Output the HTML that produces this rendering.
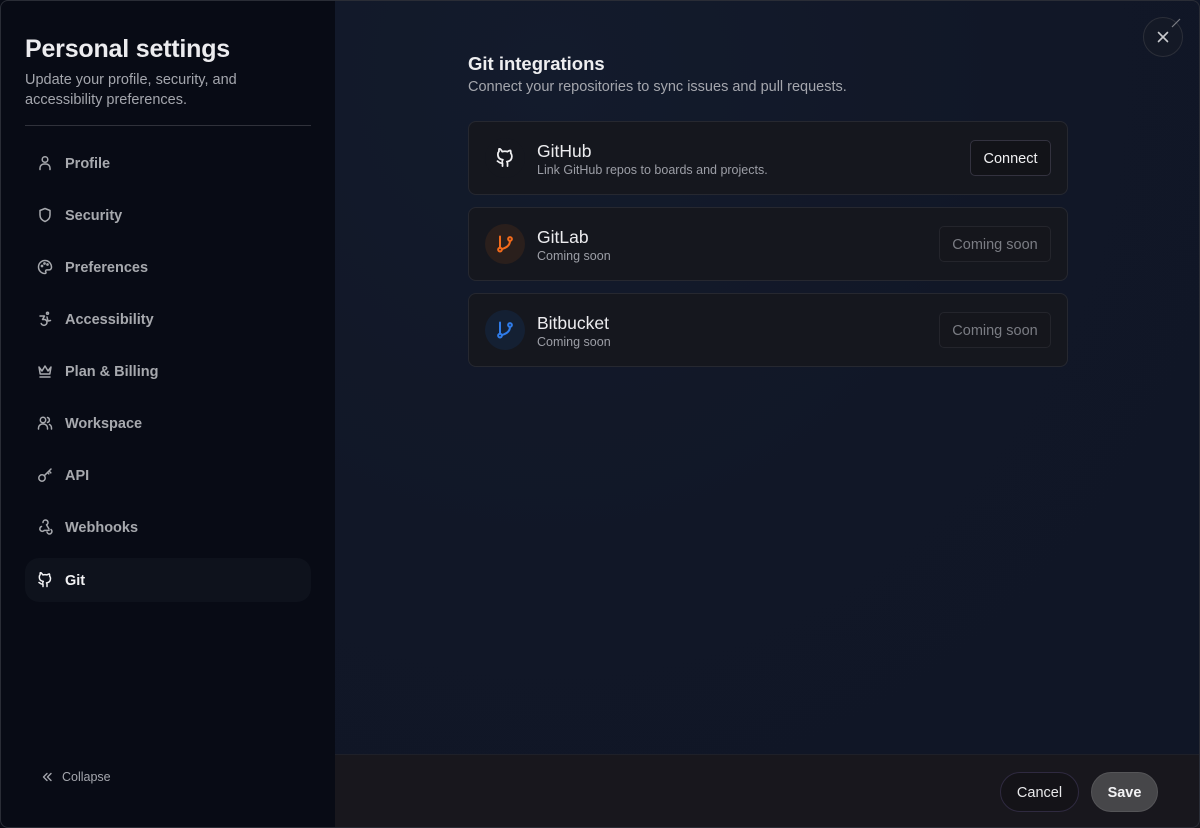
<!DOCTYPE html>
<html><head><meta charset="utf-8"><style>
*{box-sizing:border-box;margin:0;padding:0}
body{width:1200px;height:828px;overflow:hidden;background:#0b0e17;font-family:"Liberation Sans",sans-serif;position:relative}
.border{position:absolute;inset:0;border:1px solid #2a2d36;border-radius:8px;pointer-events:none;z-index:5}
.side{position:absolute;left:0;top:0;width:335px;height:828px;background:#080b15}
.side h1{position:absolute;left:25px;top:35px;font-size:25px;font-weight:700;color:#ececef;letter-spacing:-0.2px}
.side p.sub{position:absolute;left:25px;top:70px;width:260px;font-size:14.5px;line-height:20px;color:#a4a6ad}
.side .hr{position:absolute;left:25px;top:125px;width:286px;height:1px;background:#30323b}
.nav{position:absolute;left:25px;width:286px;height:44px;border-radius:14px;display:flex;align-items:center;padding-left:12px;padding-top:2px;font-size:14.5px;font-weight:700;color:#a7a9ae}
.nav svg{width:16px;height:16px;margin-right:12px;margin-top:-3px;fill:none;stroke:#a7a9ae;stroke-width:1.5;stroke-linecap:round;stroke-linejoin:round}
.nav.act{background:#0e121c;color:#f2f2f4}
.nav.act svg{stroke:#f2f2f4}
.collapse{position:absolute;left:40px;top:770px;font-size:12.5px;color:#a4a6ad;display:flex;align-items:center}
.main{position:absolute;left:335px;top:0;width:865px;height:754px;background:radial-gradient(ellipse at 25% 10%,#131b2c 0%,#111727 50%,#101626 100%)}
.foot{position:absolute;left:335px;top:754px;width:865px;height:74px;background:#18171d;border-top:1px solid #1e2029}
.main h2{position:absolute;left:133px;top:53px;font-size:18.5px;font-weight:700;color:#eeeef0}
.main p.sub{position:absolute;left:133px;top:79px;font-size:14.5px;color:#a4a6ad}
.card{position:absolute;left:133px;width:600px;height:74px;background:#15171e;border:1px solid #262830;border-radius:8px}
.card .ic{position:absolute;left:16px;top:16px;width:40px;height:40px;border-radius:50%;display:flex;align-items:center;justify-content:center}
.card .t{position:absolute;left:68px;top:19px;font-size:17.5px;color:#ececef}
.card .d{position:absolute;left:68px;top:41px;font-size:12.5px;color:#9c9ea6}
.btn{position:absolute;right:16px;top:18px;height:36px;border-radius:5px;font-size:14.5px;display:flex;align-items:center;justify-content:center;padding-top:2px}
.close{position:absolute;left:1143px;top:17px;width:40px;height:40px;border-radius:50%;border:1px solid #2c2f39;background:#141926;display:flex;align-items:center;justify-content:center}
</style></head><body>
<div class="side">
<h1>Personal settings</h1>
<p class="sub">Update your profile, security, and accessibility preferences.</p>
<div class="hr"></div>
<div class="nav" style="top:141px"><svg viewBox="0 0 16 16"><circle cx="8" cy="4.5" r="2.8"/><path d="M3 14.5v-1.5a4 4 0 0 1 4-4h2a4 4 0 0 1 4 4v1.5"/></svg>Profile</div>
<div class="nav" style="top:193px"><svg viewBox="0 0 16 16"><path d="M8 1.5l5 2v4.5c0 3.5-2.5 5.5-5 6.5-2.5-1-5-3-5-6.5V3.5z"/></svg>Security</div>
<div class="nav" style="top:245px"><svg viewBox="0 0 16 16"><path d="M8 1.5a6.5 6.5 0 1 0 0 13c1 0 1.3-.8.8-1.6-.6-.9 0-2 1-2H12a2.5 2.5 0 0 0 2.5-2.5C14.5 4.5 11.6 1.5 8 1.5z"/><circle cx="5" cy="7" r=".6"/><circle cx="7.5" cy="4.5" r=".6"/><circle cx="10.5" cy="5.5" r=".6"/></svg>Preferences</div>
<div class="nav" style="top:297px"><svg viewBox="0 0 16 16"><circle cx="10.5" cy="2.3" r="1"/><path d="M3 5h4.5l-2 3.5h2.5a3 3 0 1 1-3.8 4"/><path d="M10 6l1 4 2.5-.5"/></svg>Accessibility</div>
<div class="nav" style="top:349px"><svg viewBox="0 0 16 16"><path d="M2 4l3 4 3-5 3 5 3-4-1.2 7H3.2z"/><path d="M3 14h10"/></svg>Plan &amp; Billing</div>
<div class="nav" style="top:401px"><svg viewBox="0 0 16 16"><circle cx="6" cy="5" r="2.7"/><path d="M1.5 14v-1a4 4 0 0 1 4-4h1a4 4 0 0 1 4 4v1"/><path d="M10.5 2.5a2.6 2.6 0 0 1 0 5M12.5 9.5a4 4 0 0 1 2 3.5v1"/></svg>Workspace</div>
<div class="nav" style="top:453px"><svg viewBox="0 0 16 16"><circle cx="5" cy="11" r="3.2"/><path d="M7.3 8.7L14 2M12 4l1.8 1.8M10.5 5.5l1.3 1.3"/></svg>API</div>
<div class="nav" style="top:505px"><svg viewBox="0 0 16 16"><path d="M6 3.5a2.5 2.5 0 1 1 3.5 2.3L12 10"/><path d="M4.5 7.5a2.5 2.5 0 1 0 2.8 3.9H12"/><path d="M14 10.5a2.5 2.5 0 1 1-4 2.5"/></svg>Webhooks</div>
<div class="nav act" style="top:558px"><svg viewBox="0 0 16 16"><path d="M6 14.5v-2.5c-2.5.6-3-1.2-4-1.5M10 14.5v-2.2c0-.7-.1-1.1-.5-1.4 2-.2 4-1 4-4.4 0-.9-.3-1.7-.9-2.3.1-.7.1-1.5-.2-2.2 0 0-.8-.2-2.4.9a8 8 0 0 0-4.2 0C4.2.3 3.4.5 3.4.5c-.3.7-.3 1.5-.2 2.2-.6.6-.9 1.4-.9 2.3 0 3.4 2 4.2 4 4.4-.4.3-.5.8-.5 1.4"/></svg>Git</div>
<div class="collapse"><svg width="14" height="14" viewBox="0 0 14 14" fill="none" stroke="#a4a6ad" stroke-width="1.4" stroke-linecap="round" stroke-linejoin="round"><path d="M7 3.5L3.5 7 7 10.5M11 3.5L7.5 7l3.5 3.5"/></svg><span style="margin-left:8px">Collapse</span></div>
</div>
<div class="main">
<h2>Git integrations</h2>
<p class="sub">Connect your repositories to sync issues and pull requests.</p>
<div class="card" style="top:121px"><div class="ic" style="background:#15171e"><svg width="20" height="20" viewBox="0 0 16 16" fill="none" stroke="#f0f0f2" stroke-width="1.4" stroke-linecap="round" stroke-linejoin="round"><path d="M6 14.5v-2.5c-2.5.6-3-1.2-4-1.5M10 14.5v-2.2c0-.7-.1-1.1-.5-1.4 2-.2 4-1 4-4.4 0-.9-.3-1.7-.9-2.3.1-.7.1-1.5-.2-2.2 0 0-.8-.2-2.4.9a8 8 0 0 0-4.2 0C4.2.3 3.4.5 3.4.5c-.3.7-.3 1.5-.2 2.2-.6.6-.9 1.4-.9 2.3 0 3.4 2 4.2 4 4.4-.4.3-.5.8-.5 1.4"/></svg></div>
<div class="t">GitHub</div><div class="d">Link GitHub repos to boards and projects.</div>
<div class="btn" style="width:81px;background:#121318;border:1px solid #33323f;color:#f0f0f2">Connect</div></div>
<div class="card" style="top:207px"><div class="ic" style="background:#2a1f1c"><svg width="20" height="20" viewBox="0 0 16 16" fill="none" stroke="#f26a1b" stroke-width="1.6" stroke-linecap="round"><circle cx="4" cy="12.5" r="1.5"/><circle cx="12" cy="4" r="1.5"/><path d="M4 2v9M12 5.5c0 3.5-3 5.5-6.5 6.5"/></svg></div>
<div class="t">GitLab</div><div class="d">Coming soon</div>
<div class="btn" style="width:112px;background:#15161c;border:1px solid #24252c;color:#7a7c83">Coming soon</div></div>
<div class="card" style="top:293px"><div class="ic" style="background:#142033"><svg width="20" height="20" viewBox="0 0 16 16" fill="none" stroke="#2f7be8" stroke-width="1.6" stroke-linecap="round"><circle cx="4" cy="12.5" r="1.5"/><circle cx="12" cy="4" r="1.5"/><path d="M4 2v9M12 5.5c0 3.5-3 5.5-6.5 6.5"/></svg></div>
<div class="t">Bitbucket</div><div class="d">Coming soon</div>
<div class="btn" style="width:112px;background:#15161c;border:1px solid #24252c;color:#7a7c83">Coming soon</div></div>
</div>
<div class="foot">
<div style="position:absolute;left:665px;top:17px;width:79px;height:40px;border-radius:20px;border:1px solid #2f2a40;background:#141318;color:#e8e8ea;font-size:14.5px;display:flex;align-items:center;justify-content:center;padding-top:2px">Cancel</div>
<div style="position:absolute;left:756px;top:17px;width:67px;height:40px;border-radius:20px;background:#464649;border:1px solid #555558;color:#f2f2f4;font-size:14.5px;font-weight:700;display:flex;align-items:center;justify-content:center;padding-top:2px">Save</div>
</div>
<div class="close"><svg width="14" height="14" viewBox="0 0 14 14" stroke="#c8c9cd" stroke-width="1.6" stroke-linecap="round"><path d="M2.5 2.5l9 9M11.5 2.5l-9 9"/></svg></div>
<svg style="position:absolute;left:1170px;top:17px" width="12" height="12" viewBox="0 0 12 12" stroke="#7c7e85" stroke-width="1.2"><path d="M2 10L10 2"/></svg>
<div class="border"></div>
</body></html>
